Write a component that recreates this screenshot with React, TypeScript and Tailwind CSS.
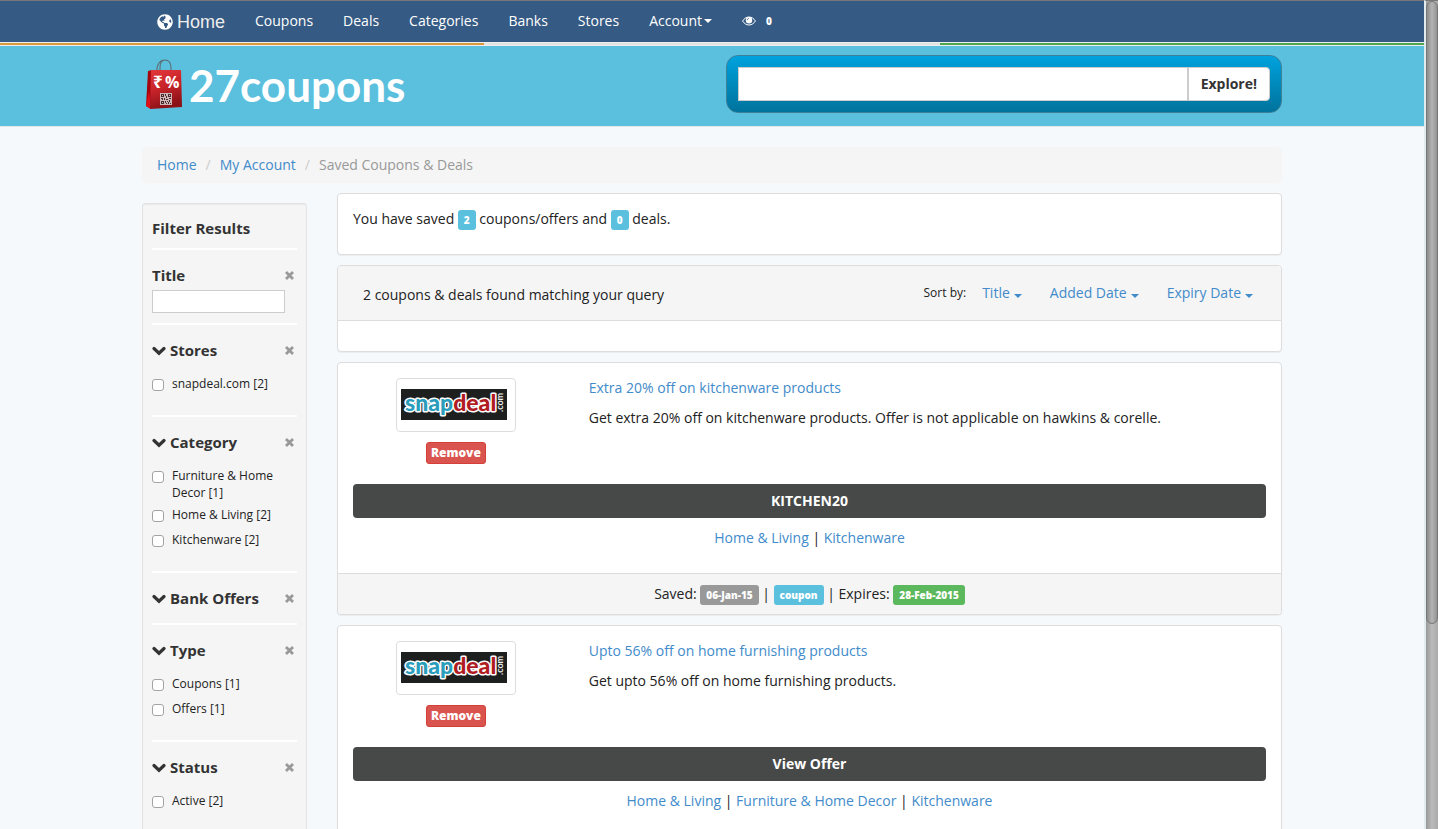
import { useState } from "react";
import type { ReactNode } from "react";
import { FaGlobeAmericas } from "react-icons/fa";

type FilterItem = { label: string; count: number };

const NAV_LINKS = ["Coupons", "Deals", "Categories", "Banks", "Stores"];

const FILTERS: { title: string; items: FilterItem[] }[] = [
  { title: "Stores", items: [{ label: "snapdeal.com", count: 2 }] },
  {
    title: "Category",
    items: [
      { label: "Furniture & Home Decor", count: 1 },
      { label: "Home & Living", count: 2 },
      { label: "Kitchenware", count: 2 },
    ],
  },
  { title: "Bank Offers", items: [] },
  {
    title: "Type",
    items: [
      { label: "Coupons", count: 1 },
      { label: "Offers", count: 1 },
    ],
  },
  { title: "Status", items: [{ label: "Active", count: 2 }] },
];

const OFFERS = [
  {
    title: "Extra 20% off on kitchenware products",
    description: "Get extra 20% off on kitchenware products. Offer is not applicable on hawkins & corelle.",
    action: "KITCHEN20",
    tags: ["Home & Living", "Kitchenware"],
    saved: "06-Jan-15",
    kind: "coupon",
    expires: "28-Feb-2015",
  },
  {
    title: "Upto 56% off on home furnishing products",
    description: "Get upto 56% off on home furnishing products.",
    action: "View Offer",
    tags: ["Home & Living", "Furniture & Home Decor", "Kitchenware"],
    saved: "06-Jan-15",
    kind: "offer",
    expires: "28-Feb-2015",
  },
];

export default function App() {
  return (
    <div className="flex h-screen bg-[#f5f9fc] font-['Open_Sans',sans-serif] text-sm text-[#222]">
      <div className="min-w-0 flex-1 overflow-y-auto [scrollbar-width:none]">
        <NavBar />
        <Header />
        <main className="mx-auto max-w-[1170px] px-[15px] pt-5">
          <Breadcrumb />
          <div className="mt-[10px] grid grid-cols-[165px_minmax(0,1fr)] items-start gap-[30px]">
            <Sidebar />
            <div className="flex flex-col gap-[10px]">
              <Panel>
                <p className="px-[15px] pt-[15px] pb-[25px]">
                  You have saved <Badge color="bg-[#5bc0de]">2</Badge> coupons/offers and{" "}
                  <Badge color="bg-[#5bc0de]">0</Badge> deals.
                </p>
              </Panel>
              <SortBar />
              {OFFERS.map((offer) => (
                <OfferCard key={offer.title} offer={offer} />
              ))}
            </div>
          </div>
        </main>
      </div>
      <ScrollTrack />
    </div>
  );
}

function NavBar() {
  return (
    <>
      <nav className="border-t border-[#777] bg-[#355a83]">
        <div className="mx-auto flex h-[41px] max-w-[1170px] items-center gap-[30px] px-[30px] pb-[2px] font-medium text-white">
          <a href="#" className="flex items-center gap-1 pt-[2px] font-['Liberation_Sans',sans-serif] text-lg font-normal text-[#eee]">
            <FaGlobeAmericas size={16} className="text-white" />
            Home
          </a>
          {NAV_LINKS.map((link) => (
            <a key={link} href="#">{link}</a>
          ))}
          <a href="#" className="flex items-center gap-[2px]">
            Account
            <Caret />
          </a>
          <a href="#" className="flex items-center gap-[10px]">
            <EyeIcon />
            <span className="pt-[2px] text-[10px] font-extrabold">0</span>
          </a>
        </div>
      </nav>
      {/* tricolour rule */}
      <div className="flex h-1 border-y border-[#eee]">
        <div className="w-[34%] bg-[#d9993f]" />
        <div className="w-[32%] bg-[#e4e4e4]" />
        <div className="flex-1 bg-[#4ca64c]" />
      </div>
    </>
  );
}

function Header() {
  return (
    <header className="border-b border-[#e0e6ea] bg-[#5bc0de]">
      <div className="mx-auto flex h-20 max-w-[1170px] items-start px-[15px] pt-[9px]">
        <a href="#" className="flex w-1/2 items-center gap-[6px] pt-1 pl-[3px]">
          <BagLogo />
          <span className="font-['Lato',sans-serif] text-[44px] leading-[48px] font-bold text-white">27coupons</span>
        </a>
        <div className="w-1/2 pl-[14px]">
          <form
            className="flex rounded-xl border border-[#3d8199] bg-linear-to-b from-[#00a2de] to-[#00739c] p-[11px]"
            onSubmit={(e) => e.preventDefault()}
          >
            <input
              type="text"
              aria-label="Search coupons"
              className="h-[34px] min-w-0 flex-1 border border-[#ccc] bg-white px-3 outline-none"
            />
            <button className="h-[34px] rounded-r border border-l border-[#ccc] bg-white px-3 font-bold text-[#333]">
              Explore!
            </button>
          </form>
        </div>
      </div>
    </header>
  );
}

function Breadcrumb() {
  return (
    <ol className="flex rounded bg-[#f5f5f5] px-[15px] py-2">
      <li><a href="#" className="text-[#428bca]">Home</a></li>
      <li className="px-[9px] text-[#ccc]">/</li>
      <li><a href="#" className="text-[#428bca]">My Account</a></li>
      <li className="px-[9px] text-[#ccc]">/</li>
      <li className="text-[#999]">Saved Coupons &amp; Deals</li>
    </ol>
  );
}

function Sidebar() {
  return (
    <aside className="mt-[10px] rounded-[3px] border border-[#e3e3e3] bg-[#f5f5f5] px-[9px] pt-[13px] pb-[9px] shadow-[inset_0_1px_1px_rgba(0,0,0,0.05)]">
      <h2 className="mb-[9px] text-[15px] leading-[22px] font-bold text-[#333]">Filter Results</h2>
      <section className="border-t-2 border-white pt-[14px] pb-[10px]">
        <div className="flex items-center justify-between pr-[3px]">
          <label htmlFor="title" className="text-[15px] leading-[22px] font-bold text-[#333]">Title</label>
          <ClearButton name="Title" />
        </div>
        <input id="title" type="text" className="mt-1 block h-[23px] w-[133px] border border-[#ccc] bg-white px-1 text-xs outline-none" />
      </section>
      {FILTERS.map((filter) => (
        <FilterSection key={filter.title} title={filter.title} items={filter.items} />
      ))}
    </aside>
  );
}

function FilterSection({ title, items }: { title: string; items: FilterItem[] }) {
  const [open, setOpen] = useState(true);
  return (
    <section className="border-t-2 border-white py-[14px]">
      <div className="flex items-center justify-between pr-[3px]">
        <button onClick={() => setOpen(!open)} className="flex items-center gap-[3px] text-[15px] leading-[22px] font-bold text-[#333]">
          <svg width="15" height="14" viewBox="0 0 15 14" fill="none" stroke="currentColor" strokeWidth="3.2">
            <path d="M2 5.500 7 10.200 12 5.500" strokeLinecap="round" />
          </svg>
          {title}
        </button>
        <ClearButton name={title} />
      </div>
      {open && items.length > 0 && (
        <ul className="flex flex-col gap-[5px] pt-[14px] pb-[6px]">
          {items.map((item) => (
            <li key={item.label} className="min-h-5">
              <label className="flex gap-2 text-xs leading-[17px]">
                <input
                  type="checkbox"
                  className="mt-1 size-3 shrink-0 appearance-none rounded-[3px] border border-[#a3a3a3] bg-white checked:bg-[#428bca]"
                />
                <span>{`${item.label} [${item.count}]`}</span>
              </label>
            </li>
          ))}
        </ul>
      )}
    </section>
  );
}

function ClearButton({ name }: { name: string }) {
  return (
    <button aria-label={`Clear ${name}`} className="text-[#999]">
      <svg width="9" height="9" viewBox="0 0 9 9" stroke="currentColor" strokeWidth="2.8">
        <path d="M1 1 8 8M8 1 1 8" />
      </svg>
    </button>
  );
}

function SortBar() {
  return (
    <Panel>
      <div className="flex items-center justify-between border-b border-[#ddd] bg-[#f5f5f5] py-[17px] pr-[28px] pl-[25px]">
        <p className="pt-1 leading-4">2 coupons &amp; deals found matching your query</p>
        <div className="flex items-center">
          <span className="mr-4 text-xs">Sort by:</span>
          <div className="flex gap-[28px]">
            {["Title", "Added Date", "Expiry Date"].map((key) => (
              <a key={key} href="#" className="flex items-center gap-1 text-[#428bca]">
                {key}
                <span className="pt-[5px]"><Caret /></span>
              </a>
            ))}
          </div>
        </div>
      </div>
      <div className="h-[30px]" />
    </Panel>
  );
}

function OfferCard({ offer }: { offer: (typeof OFFERS)[number] }) {
  return (
    <Panel>
      <div className="flex pt-[15px]">
        <div className="flex w-1/4 flex-col items-center gap-[10px] px-[15px]">
          <a href="#" className="flex h-[54px] w-[120px] items-start rounded border border-[#ddd] bg-white px-1 pt-[10px]">
            <SnapdealLogo />
          </a>
          <button className="h-[22px] rounded-[3px] border border-[#d43f3a] bg-[#d9534f] px-1 text-xs leading-5 font-extrabold text-white">
            Remove
          </button>
        </div>
        <div className="flex w-3/4 flex-col gap-[10px] px-[15px]">
          <h3><a href="#" className="text-[#428bca]">{offer.title}</a></h3>
          <p>{offer.description}</p>
        </div>
      </div>
      <div className="px-[15px] pt-5 pb-[25px] text-center">
        <button className="mb-[10px] block h-[34px] w-full rounded bg-[#474949] font-bold text-white">{offer.action}</button>
        <p>
          {offer.tags.map((tag, i) => (
            <span key={tag}>
              {i > 0 && " | "}
              <a href="#" className="text-[#428bca]">{tag}</a>
            </span>
          ))}
        </p>
      </div>
      <p className="border-t border-[#ddd] bg-[#f5f5f5] py-[10px] text-center">
        Saved: <Badge color="bg-[#999]">{offer.saved}</Badge> | <Badge color="bg-[#5bc0de]">{offer.kind}</Badge> | Expires:{" "}
        <Badge color="bg-[#5cb85c]">{offer.expires}</Badge>
      </p>
    </Panel>
  );
}

function Panel({ children }: { children: ReactNode }) {
  return (
    <div className="overflow-hidden rounded border border-[#ddd] bg-white shadow-[0_1px_1px_rgba(0,0,0,0.05)]">
      {children}
    </div>
  );
}

function Badge({ color, children }: { color: string; children: ReactNode }) {
  return (
    <span className={`mt-px -mb-px inline-block h-5 rounded-[3px] px-[6px] align-top text-[10px] leading-5 font-extrabold text-white ${color}`}>
      {children}
    </span>
  );
}

function Caret() {
  return (
    <svg width="8" height="4" viewBox="0 0 8 4" fill="currentColor">
      <path d="M0 0H8L4 4Z" />
    </svg>
  );
}

function EyeIcon() {
  return (
    <svg width="14" height="10" viewBox="0 0 14 10">
      <path d="M.6 5C2 2.6 4.400 1 7 1s5 1.600 6.400 4C12 7.400 9.600 9 7 9S2 7.400.6 5Z" fill="none" stroke="#fff" />
      <circle cx="7" cy="4.300" r="3.200" fill="#fff" />
      <path d="M5.300 4.200c0-1 .7-1.700 1.700-1.700" fill="none" stroke="#355a83" strokeWidth=".8" />
    </svg>
  );
}

function BagLogo() {
  return (
    <svg width="38" height="52" viewBox="0 0 38 52">
      <defs>
        <linearGradient id="bag" x1="0" y1="0" x2="0.3" y2="1">
          <stop offset="0" stopColor="#e2383c" />
          <stop offset="0.5" stopColor="#c9242a" />
          <stop offset="1" stopColor="#8c1218" />
        </linearGradient>
      </defs>
      <path d="M15 15V9C15 3 17 1 20 1s6 2 6 8v6M12 14V9c1-5 3-7 6-8" fill="none" stroke="#5c6a70" strokeWidth="1.100" />
      <path d="M3 12 7 11 6 50 1 47Z" fill="#a3060c" />
      <path d="M1 47 4 32 6 50Z" fill="#e01018" />
      <path d="M6 11H36L37 48 5 50Z" fill="url(#bag)" />
      <text x="8" y="29" fontSize="17" fontWeight="700" fill="#fff" fontFamily="Noto Sans, DejaVu Sans, sans-serif">₹</text>
      <text x="20" y="29" fontSize="16" fontWeight="700" fill="#fff" fontFamily="Open Sans, sans-serif">%</text>
      <rect x="15" y="34" width="12" height="12" fill="#cdb5b5" />
      <path
        d="M16 35h3v1h-3zM16 37h3v1h-3zM16 36h1v1h-1zM18 36h1v1h-1zM23 35h3v1h-3zM23 37h3v1h-3zM23 36h1v1h-1zM25 36h1v1h-1zM16 42h3v1h-3zM16 44h3v1h-3zM16 43h1v1h-1zM18 43h1v1h-1zM20 35h1v2h-1zM21 37h1v2h-1zM16 39h2v1h-2zM19 39h1v2h-1zM21 40h2v1h-2zM24 39h2v1h-2zM17 40h1v1h-1zM20 42h1v2h-1zM22 42h1v1h-1zM24 41h1v2h-1zM23 43h1v2h-1zM25 44h1v1h-1zM21 44h1v1h-1z"
        fill="#4c2c2e"
      />
    </svg>
  );
}

function SnapdealLogo() {
  return (
    <svg width="106" height="31" viewBox="0 0 106 31">
      <rect width="106" height="31" fill="#1e1f1f" />
      <g
        fontFamily="Lato, sans-serif"
        fontSize="23"
        fontWeight="900"
        stroke="#fff"
        strokeWidth="3"
        strokeLinejoin="round"
        paintOrder="stroke"
      >
        <text x="4" y="22" fill="#2a9dbc">snap<tspan fill="#b01c22">deal</tspan></text>
      </g>
      <text x="-23" y="102" transform="rotate(-90)" fontFamily="Lato, sans-serif" fontSize="9" fontWeight="700" fill="#eee">.com</text>
    </svg>
  );
}

function ScrollTrack() {
  return (
    <div className="w-[14px] shrink-0 border-t border-l-2 border-t-[#777] border-l-[#e4ebef] bg-linear-to-r from-[#999] via-[#bbb] to-[#aaa]" aria-hidden="true">
      <div className="h-[623px] max-h-full rounded-full border border-[#777] bg-linear-to-r from-[#8c8c8c] via-[#b4b4b4] to-[#939393]" />
    </div>
  );
}
